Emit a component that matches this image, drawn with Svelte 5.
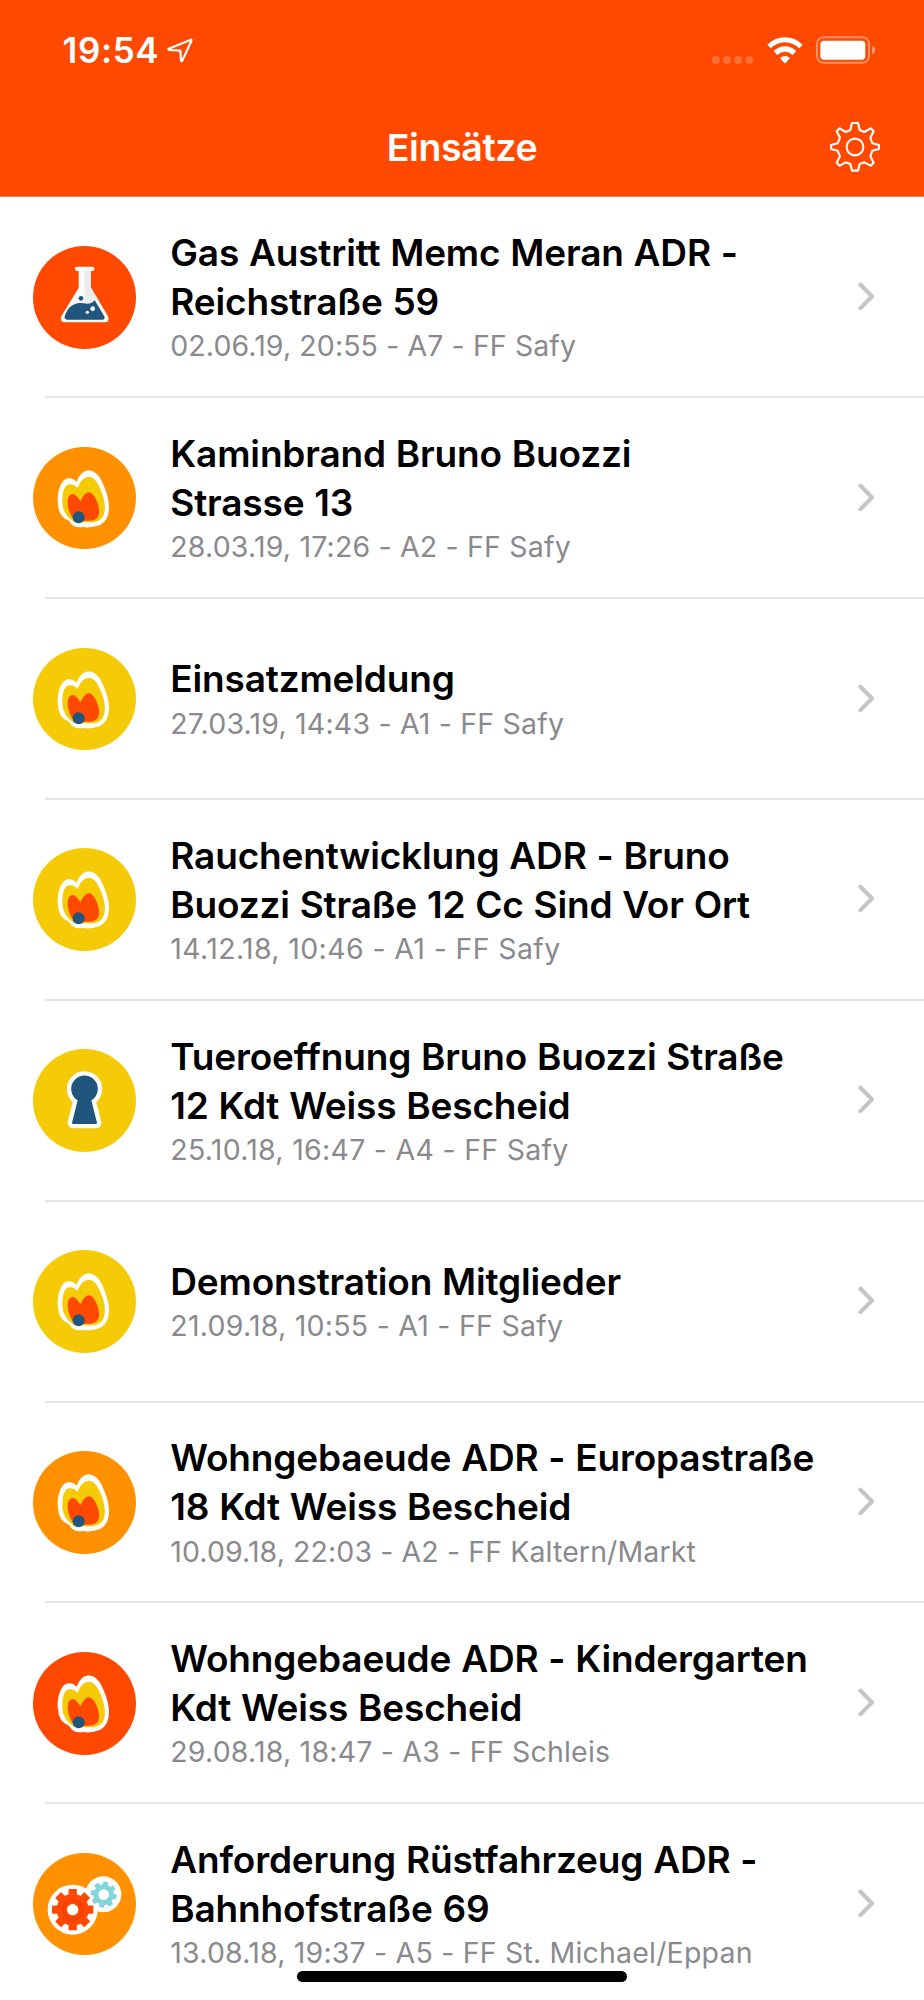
<script>
  const missions = [
    { icon: 'flask', color: '#ff4800', lines: ['Gas Austritt Memc Meran ADR -', 'Reichstraße 59'], info: '02.06.19, 20:55 - A7 - FF Safy', track: 0.1 },
    { icon: 'flame', color: '#ff9100', lines: ['Kaminbrand Bruno Buozzi', 'Strasse 13'], info: '28.03.19, 17:26 - A2 - FF Safy', track: 0.18 },
    { icon: 'flame', color: '#f4cb06', lines: ['Einsatzmeldung'], info: '27.03.19, 14:43 - A1 - FF Safy', track: 0.19 },
    { icon: 'flame', color: '#f4cb06', lines: ['Rauchentwicklung ADR - Bruno', 'Buozzi Straße 12 Cc Sind Vor Ort'], info: '14.12.18, 10:46 - A1 - FF Safy', track: 0.37 },
    { icon: 'key', color: '#f4cb06', lines: ['Tueroeffnung Bruno Buozzi Straße', '12 Kdt Weiss Bescheid'], info: '25.10.18, 16:47 - A4 - FF Safy', track: 0.28 },
    { icon: 'flame', color: '#f4cb06', lines: ['Demonstration Mitglieder'], info: '21.09.18, 10:55 - A1 - FF Safy', track: 0.25 },
    { icon: 'flame', color: '#ff9100', lines: ['Wohngebaeude ADR - Europastraße', '18 Kdt Weiss Bescheid'], info: '10.09.18, 22:03 - A2 - FF Kaltern/Markt', track: 0.1 },
    { icon: 'flame', color: '#ff4800', lines: ['Wohngebaeude ADR - Kindergarten', 'Kdt Weiss Bescheid'], info: '29.08.18, 18:47 - A3 - FF Schleis', track: 0.2 },
    { icon: 'gears', color: '#ff9100', lines: ['Anforderung Rüstfahrzeug ADR -', 'Bahnhofstraße 69'], info: '13.08.18, 19:37 - A5 - FF St. Michael/Eppan', track: 0.19 }
  ];
  const teeth = [0, 45, 90, 135, 180, 225, 270, 315];
</script>

<div class="screen">
  <header>
    <div class="status">
      <span class="time">19:54</span>
      <svg class="arrow" viewBox="501 114 78 75"><path d="M573 119 506 146Q504 149 508 150L541 152 543 181Q544 186 547 182L574 123Q575 119 573 119Z" fill="none" stroke="#fff" stroke-width="6.500" stroke-linejoin="round" /></svg>
      <div class="fill"></div>
      <svg class="dots" viewBox="68 167 124 24" fill="#fff" opacity=".22">
        <rect x="68" y="167.500" width="22.500" height="22.500" rx="7" /><rect x="101.500" y="167.500" width="22.500" height="22.500" rx="7" /><rect x="135" y="167.500" width="22.500" height="22.500" rx="7" /><rect x="168.500" y="167.500" width="22.500" height="22.500" rx="7" />
      </svg>
      <svg class="wifi" viewBox="232 110 108 81" fill="#fff">
        <path d="M233 133Q256 111 286 111T339 133L329 144Q310 126 286 126T243 144Z" />
        <path d="M252 152Q267 138 286 138T320 152L309 164Q299 154 286 154T263 164Z" />
        <path d="M271 173Q278 167 286 167T301 173L288 188Q286 190 284 188Z" />
      </svg>
      <svg class="battery" viewBox="380 109 180 84">
        <rect x="383" y="112.500" width="156" height="77" rx="20" fill="none" stroke="#fff" stroke-opacity=".4" stroke-width="6" />
        <rect x="393" y="123" width="135" height="57" rx="11" fill="#fff" />
        <path d="M549 138Q558 143 558 151T549 165Z" fill="#fff" fill-opacity=".5" />
      </svg>
    </div>
    <div class="nav">
      <h1>Einsätze</h1>
      <svg class="settings" viewBox="419 365 150 150" fill="none" stroke="#fff" stroke-width="6.300" stroke-linejoin="round">
        <path d="M485 368H503L508 389 522 395 541 384 550 393 540 412 546 429 566 434V446L546 451 540 468 550 487 541 496 522 486 508 491 503 511H485L480 491 466 486 448 496 439 487 449 468 442 451 422 446V434L442 429 449 412 439 393 448 384 466 395 480 389Z" />
        <circle cx="494" cy="440" r="25" />
      </svg>
    </div>
  </header>

  <main>
    {#each missions as m}
      <article>
        <div class="badge" style="background:{m.color}">
          {#if m.icon === 'flask'}
            <svg viewBox="40 46 308 308">
              <path d="M172 108H218A6.500 6.500 0 0 1 218 121H214V171L265 257Q271 275 255 275H137Q119 275 125 257L177 171V121H172A6.500 6.500 0 0 1 172 108Z" fill="#fafafa" />
              <path d="M195 121H214V171L238 211 195 221Z" fill="#ececec" />
              <path d="M137 251Q149 221 177 217 190 216 201 219 216 220 225 209L254 257Q257 267 248 267H143Q133 266 135 257Z" fill="#20567d" />
              <circle cx="184" cy="203" r="7" fill="#20567d" />
              <circle cx="219" cy="234" r="7" fill="#fff" /><circle cx="203" cy="245" r="5" fill="#fff" />
            </svg>
          {:else if m.icon === 'flame'}
            <svg viewBox="40 49 308 308">
              <path d="M171 153Q184 119 208 119 233 121 247 153C259 178 268 204 268 230Q268 269 241 283 215 293 190 289 160 294 149 271 116 259 115 220C111 193 121 143 148 143Q161 143 171 153Z" fill="#fff" />
              <path d="M173 172Q186 139 208 138 227 140 238 166C250 191 258 216 255 240Q251 276 209 275H165Q131 254 128 220 126 168 147 161 164 159 173 172Z" fill="#f4cb06" />
              <path d="M182 212Q194 185 209 185 223 188 234 218C244 249 238 271 208 270H165Q146 247 144 220 142 193 158 190 171 191 182 212Z" fill="#ff4800" />
              <circle cx="177" cy="260" r="18" fill="#20567d" />
            </svg>
          {:else if m.icon === 'key'}
            <svg viewBox="40 42 308 308">
              <path d="M174 196A40 40 0 1 1 215 196L232 263Q232 267 228 267H161Q157 267 157 263Z" fill="#20567d" stroke="#fff" stroke-width="26" stroke-linejoin="round" paint-order="stroke" />
            </svg>
          {:else}
            <svg viewBox="40 38 308 308">
              <circle cx="159" cy="208" r="75" fill="#fff" /><circle cx="251" cy="162" r="54" fill="#fff" />
              <g transform="translate(159 208)" fill="#ff4800">
                {#each teeth as a}<rect x="-12.500" y="-62" width="25" height="28" rx="1.500" transform="rotate({a})" />{/each}
                <circle r="48" /><circle r="29" fill="none" stroke="#f04006" stroke-width="8" /><circle r="17" fill="#fff" />
              </g>
              <g transform="translate(252 163) rotate(10)" fill="#82d5da">
                {#each teeth as a}<rect x="-7.500" y="-39" width="15" height="18" rx="1" transform="rotate({a})" />{/each}
                <circle r="31" /><circle r="16" fill="#fff" />
              </g>
            </svg>
          {/if}
        </div>
        <div class="text">
          <h2>{#each m.lines as line}<span>{line}</span>{/each}</h2>
          <p style="letter-spacing:{m.track}px">{m.info}</p>
        </div>
        <svg class="chevron" viewBox="0 0 18 30"><path d="M2.500 2.700 14 14.400 2.500 26.100" fill="none" stroke="#c5c5c8" stroke-width="4.200" stroke-linecap="round" stroke-linejoin="round" /></svg>
      </article>
    {/each}
  </main>
  <div class="home"></div>
</div>

<style>
  :global(body) { margin: 0; background: #fff; }
  .screen { position: relative; width: 924px; height: 2000px; overflow: hidden; background: #fff; font-family: Inter, "Liberation Sans", sans-serif; }
  svg { display: block; flex: none; }
  header { box-sizing: border-box; height: 197px; margin-bottom: -.6px; border-bottom: 1px solid #dc7f5c; background: #ff4800; color: #fff; }
  .status { display: flex; height: 98px; box-sizing: border-box; padding: 0 48px 0 62.500px; align-items: flex-start; }
  .time { width: 96px; margin-top: 29px; font-size: 35px; line-height: 42px; font-weight: 600; letter-spacing: .6px; white-space: nowrap; }
  .arrow { width: 26px; height: 25px; margin: 38px 0 0 8.500px; }
  .fill { flex: 1; }
  .dots { width: 41.3px; height: 8px; margin-top: 55.700px; }
  .wifi { width: 36px; height: 27px; margin: 36.700px 0 0 13.300px; }
  .battery { width: 60px; height: 28px; margin: 36.300px 0 0 13.300px; }
  .nav { display: grid; grid-template-columns: 1fr auto 1fr; align-items: center; height: 98px; padding-right: 44.500px; padding-left: 44.500px; }
  h1 { grid-column: 2; margin: 2px 0 0; font-size: 37.500px; line-height: 48px; font-weight: 600; letter-spacing: -.4px; }
  .settings { grid-column: 3; justify-self: end; width: 50px; height: 50px; }
  article { position: relative; display: flex; align-items: center; height: 200.870px; box-sizing: border-box; padding: 0 48px 0 33.400px; }
  article::after { content: ""; position: absolute; right: 0; bottom: -1px; left: 45px; height: 2px; background: #e5e5e6; }
  .badge { flex: none; width: 102.700px; height: 102.700px; margin-top: .8px; border-radius: 50%; overflow: hidden; }
  .badge svg { width: 100%; height: 100%; }
  .text { flex: 1; min-width: 0; margin-left: 34.200px; padding-top: .8px; }
  h2 { margin: 0; color: #000; font-size: 37px; line-height: 49.100px; font-weight: 600; letter-spacing: -.16px; word-spacing: .7px; font-variant-ligatures: none; white-space: nowrap; }
  h2 span { display: block; position: relative; top: -2.200px; }
  p { margin: 0; color: #8a8a8e; font-size: 28.500px; line-height: 35.700px; white-space: nowrap; }
  .chevron { width: 18px; height: 30px; }
  .home { position: absolute; bottom: 18px; left: 297px; width: 330px; height: 11px; border-radius: 6px; background: #000; }
</style>
